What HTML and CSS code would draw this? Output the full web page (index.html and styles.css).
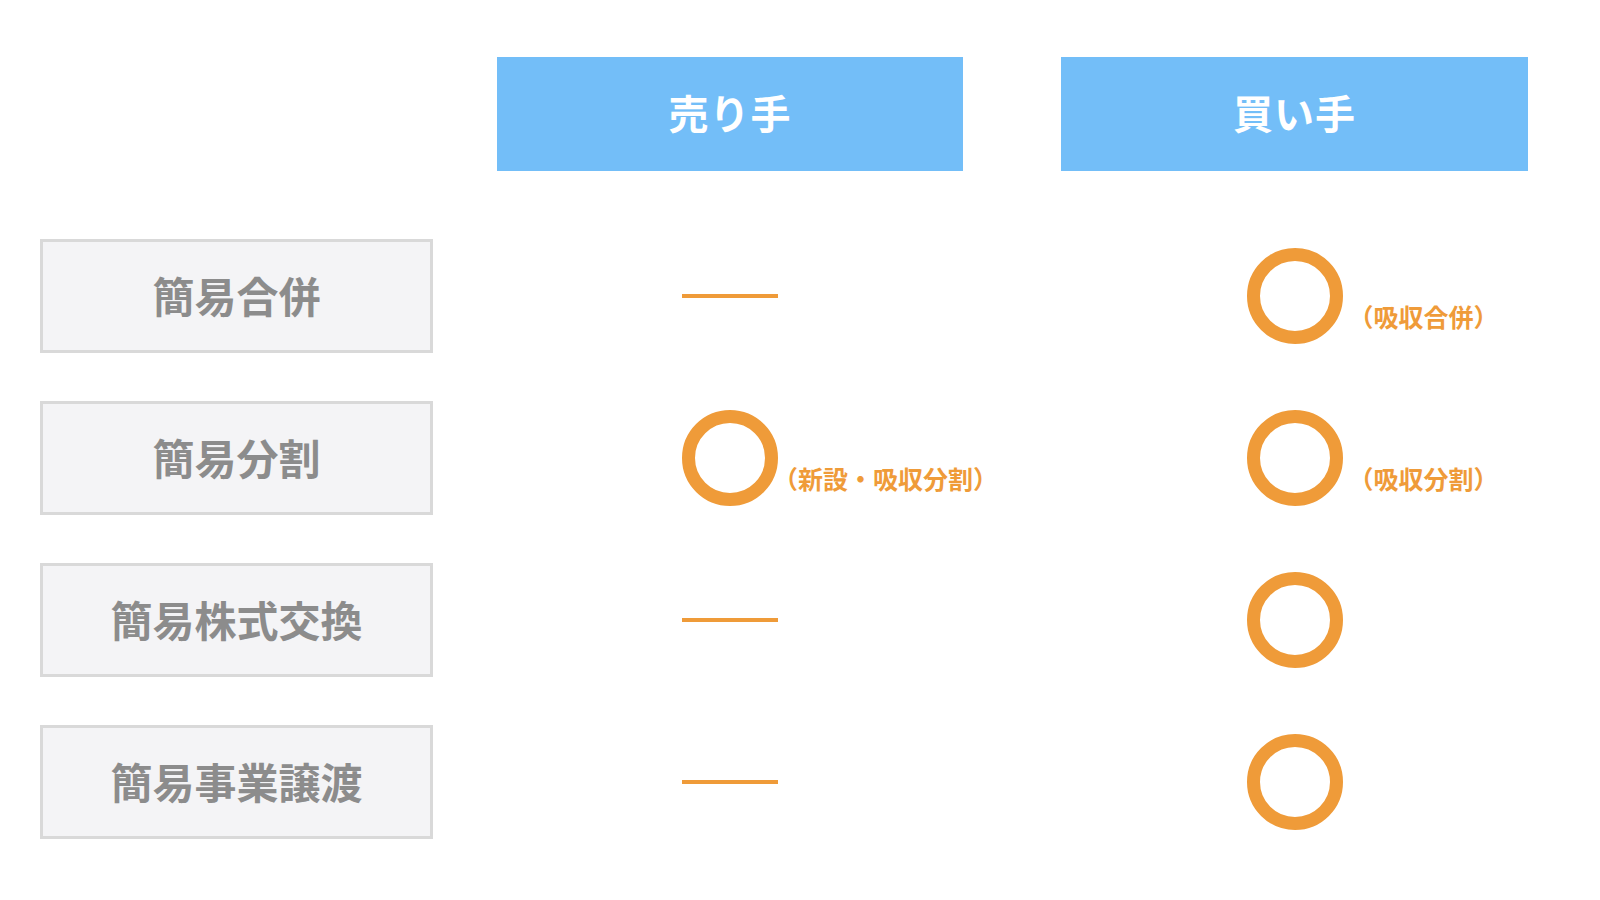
FILE: index.html
```html
<!DOCTYPE html>
<html lang="ja">
<head>
<meta charset="utf-8">
<title>簡易組織再編</title>
<link rel="stylesheet" href="styles.css">
</head>
<body>
<div class="page">
  <div class="grid head">
    <div class="blank"></div>
    <div class="head-cell">売り手</div>
    <div class="head-cell buyer">買い手</div>
  </div>
  <div class="grid body">
    <div class="label">簡易合併</div>
    <div class="mark"><span class="dash"></span></div>
    <div class="mark buyer"><span class="circle"><span class="note note-b">（吸収合併）</span></span></div>

    <div class="label">簡易分割</div>
    <div class="mark"><span class="circle"><span class="note note-s">（新設・吸収分割）</span></span></div>
    <div class="mark buyer"><span class="circle"><span class="note note-b">（吸収分割）</span></span></div>

    <div class="label">簡易株式交換</div>
    <div class="mark"><span class="dash"></span></div>
    <div class="mark buyer"><span class="circle"></span></div>

    <div class="label">簡易事業譲渡</div>
    <div class="mark"><span class="dash"></span></div>
    <div class="mark buyer"><span class="circle"></span></div>
  </div>
</div>
</body>
</html>
```

FILE: styles.css
```css
html, body {
  margin: 0;
  padding: 0;
  background: #ffffff;
}

body {
  font-family: "Noto Sans CJK JP", "Noto Sans", sans-serif;
  font-weight: 700;
}

.page {
  padding: 57px 0 0 40px;
}

.grid {
  display: grid;
  grid-template-columns: 393px 466px 501px;
  column-gap: 64px;
}

.head {
  grid-template-rows: 114px;
}

.head-cell {
  box-sizing: border-box;
  padding-bottom: 4px;
  background: #73bef8;
  color: #ffffff;
  font-size: 40px;
  display: flex;
  align-items: center;
  justify-content: center;
  letter-spacing: 1px;
}

.buyer {
  margin-left: 34px;
}

.body {
  margin-top: 68px;
  grid-auto-rows: 114px;
  row-gap: 48px;
}

.label {
  box-sizing: border-box;
  padding-bottom: 4px;
  border: 3px solid #d9d9d9;
  background: #f4f4f6;
  color: #8c8c8c;
  font-size: 42px;
  display: flex;
  align-items: center;
  justify-content: center;
}

.mark {
  display: flex;
  align-items: center;
  justify-content: center;
}

.dash {
  display: block;
  width: 96px;
  height: 4px;
  background: #ef9b39;
}

.circle {
  position: relative;
  display: block;
  box-sizing: border-box;
  width: 96px;
  height: 96px;
  border: 13px solid #ef9b39;
  border-radius: 50%;
}

.note {
  position: absolute;
  top: 43px;
  white-space: nowrap;
  color: #ef9b39;
  font-size: 25px;
  line-height: 25px;
}

.note-s {
  left: 78px;
}

.note-b {
  left: 89px;
}
```
